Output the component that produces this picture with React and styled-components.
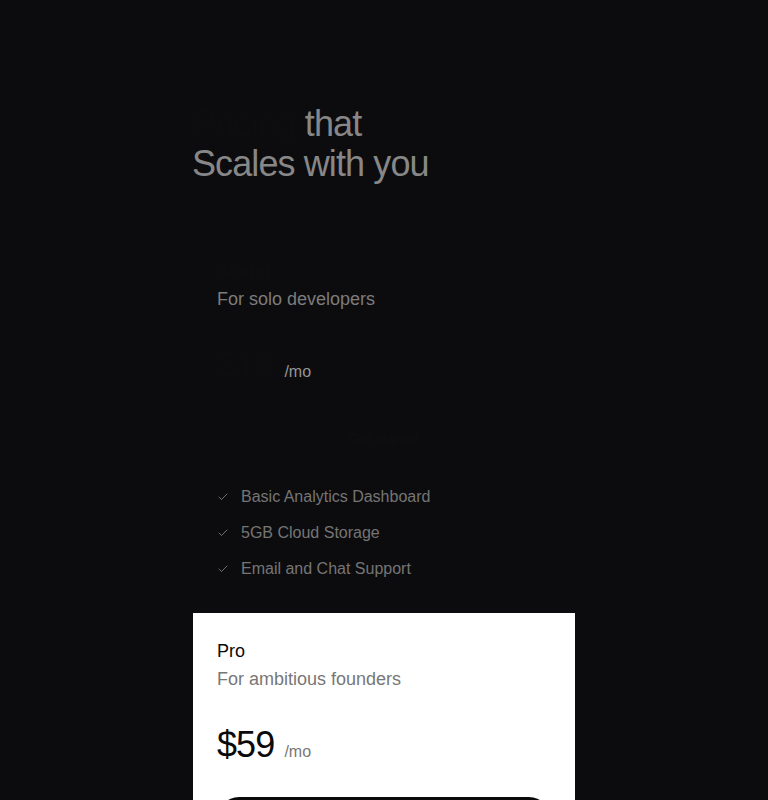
import React from "react";
import styled, { createGlobalStyle } from "styled-components";

const GlobalStyle = createGlobalStyle`
  html, body {
    margin: 0;
    padding: 0;
    background: #0c0c0e;
  }
  body {
    font-family: "Liberation Sans", Arial, sans-serif;
    -webkit-font-smoothing: antialiased;
  }
`;

const plans = [
  {
    name: "Starter",
    tagline: "For solo developers",
    price: "$19",
    cta: "Get started",
    features: ["Basic Analytics Dashboard", "5GB Cloud Storage", "Email and Chat Support"],
    featured: false,
  },
  {
    name: "Pro",
    tagline: "For ambitious founders",
    price: "$59",
    cta: "Get started",
    features: ["Advanced Analytics", "50GB Cloud Storage", "Priority Support"],
    featured: true,
  },
];

function CheckIcon() {
  return (
    <svg width="12" height="12" viewBox="0 0 24 24" fill="none" stroke="currentColor" strokeWidth="1.6" strokeLinecap="round" strokeLinejoin="round">
      <path d="M20 6 9 17l-5-5" />
    </svg>
  );
}

function PlanCard({ plan }) {
  return (
    <Card $featured={plan.featured}>
      <div className="plan-name">{plan.name}</div>
      <div className="plan-tagline">{plan.tagline}</div>
      <div className="price-row">
        <span className="price">{plan.price}</span>
        <span className="period">/mo</span>
      </div>
      <CtaButton $featured={plan.featured}>{plan.cta}</CtaButton>
      <FeatureList>
        {plan.features.map((f) => (
          <li key={f}>
            <span className="check"><CheckIcon /></span>
            <span>{f}</span>
          </li>
        ))}
      </FeatureList>
    </Card>
  );
}

export default function App() {
  return (
    <>
      <GlobalStyle />
      <Page>
        <Heading>
          <span className="hidden-word">Pricing </span>that
          <br />
          Scales with you
        </Heading>
        <Plans>
          {plans.map((p) => (
            <PlanCard key={p.name} plan={p} />
          ))}
        </Plans>
      </Page>
    </>
  );
}

const Page = styled.div`
  max-width: 384px;
  margin: 0 auto;
  padding-top: 104px;
  padding-bottom: 80px;
`;

const Heading = styled.h1`
  margin: 0 0 49px;
  font-size: 36px;
  line-height: 40px;
  font-weight: 400;
  letter-spacing: -0.025em;
  color: #878787;

  .hidden-word {
    color: #0d0d0f;
  }
`;

const Plans = styled.div`
  display: flex;
  flex-direction: column;
  gap: 8px;
  padding: 0 1px;
`;

const Card = styled.div`
  padding: 24px;
  background: ${(p) => (p.$featured ? "#ffffff" : "#0c0c0e")};

  .plan-name {
    font-size: 18px;
    line-height: 28px;
    color: ${(p) => (p.$featured ? "#0a0a0a" : "#0e0e10")};
  }

  .plan-tagline {
    font-size: 18px;
    line-height: 28px;
    color: ${(p) => (p.$featured ? "#777777" : "#7c7c7c")};
  }

  .price-row {
    display: flex;
    align-items: baseline;
    gap: 10px;
    margin-top: 32px;
  }

  .price {
    font-size: 36px;
    line-height: 40px;
    letter-spacing: -0.025em;
    color: ${(p) => (p.$featured ? "#0a0a0a" : "#0d0d0f")};
  }

  .period {
    font-size: 16px;
    line-height: 24px;
    color: ${(p) => (p.$featured ? "#777777" : "#959595")};
  }
`;

const CtaButton = styled.button`
  display: block;
  width: 100%;
  height: 44px;
  margin-top: 32px;
  border-radius: 999px;
  border: none;
  font-family: inherit;
  font-size: 14px;
  cursor: pointer;
  background: ${(p) => (p.$featured ? "#0a0a0a" : "#0c0c0e")};
  color: ${(p) => (p.$featured ? "#ffffff" : "#0f0f11")};
`;

const FeatureList = styled.ul`
  list-style: none;
  margin: 24px 0 0;
  padding: 0;
  display: flex;
  flex-direction: column;
  gap: 12px;

  li {
    display: flex;
    align-items: center;
    gap: 12px;
    font-size: 16px;
    line-height: 24px;
    color: #757575;
  }

  .check {
    display: flex;
    color: #8a8a8a;
  }
`;
